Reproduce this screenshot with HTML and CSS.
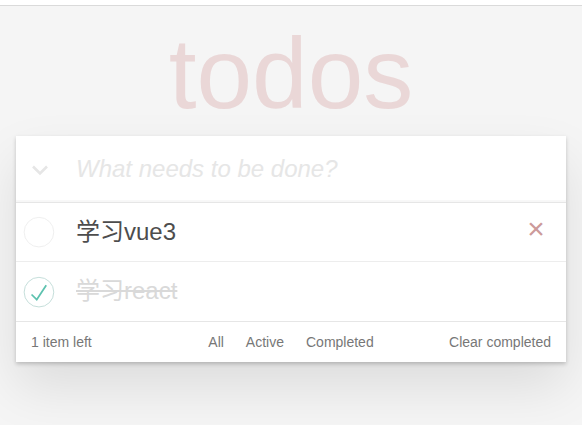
FILE: index.html
```html
<!DOCTYPE html>
<html lang="zh">
<head>
<meta charset="utf-8">
<title>todos</title>
<link rel="stylesheet" href="styles.css">
</head>
<body>
<div class="topbar"></div>
<section class="todoapp">
  <h1 class="title">todos</h1>
  <div class="card">
    <div class="new-row">
      <span class="toggle-all">
        <svg width="60" height="65" viewBox="0 0 60 65"><path d="M17 30.5 L24 37.5 L31 30.5" fill="none" stroke="#e6e6e6" stroke-width="2.6"/></svg>
      </span>
      <input class="new-todo" placeholder="What needs to be done?">
    </div>
    <ul class="todo-list">
      <li class="todo">
        <span class="toggle">
          <svg width="40" height="40" viewBox="-10 -18 100 135"><circle cx="50" cy="50" r="50" fill="none" stroke="#ededed" stroke-width="3"/></svg>
        </span>
        <label class="todo-label">学习vue3</label>
        <span class="destroy">×</span>
      </li>
      <li class="todo completed">
        <span class="toggle">
          <svg width="40" height="40" viewBox="-10 -18 100 135"><circle cx="50" cy="50" r="50" fill="none" stroke="#bddad5" stroke-width="3"/><path fill="#5dc2af" d="M72 25L42 71 27 56l-4 4 20 20 34-52z"/></svg>
        </span>
        <label class="todo-label">学习react</label>
      </li>
    </ul>
    <footer class="footer">
      <span class="todo-count"><strong>1</strong> item left</span>
      <ul class="filters"><li><a class="filter">All</a></li><li><a class="filter">Active</a></li><li><a class="filter">Completed</a></li></ul>
      <span class="clear">Clear completed</span>
    </footer>
  </div>
</section>
</body>
</html>
```

FILE: styles.css
```css
html, body { margin: 0; padding: 0; }
html { background: #f5f5f5; min-height: 100%; }
body {
  min-height: 425px;
  background: #f5f5f5;
  font-family: "Liberation Sans", Arial, "Noto Sans CJK SC", sans-serif;
  font-size: 14px;
  line-height: 1.4em;
  color: #4d4d4d;
}
.topbar {
  height: 5px;
  background: #fff;
  border-bottom: 1px solid #dadada;
}
.todoapp {
  width: 550px;
  margin: 0 auto 40px;
}
.title {
  margin: 0;
  padding-top: 5px;
  height: 125px;
  line-height: 125px;
  font-size: 100px;
  font-weight: 100;
  text-align: center;
  color: rgba(175, 47, 47, 0.15);
}
.card {
  background: #fff;
  box-shadow: 0 2px 4px 0 rgba(0,0,0,0.2), 0 25px 50px 0 rgba(0,0,0,0.1);
}
.new-row {
  display: flex;
  height: 65.6px;
  box-shadow: inset 0 -2px 1px rgba(0,0,0,0.03);
}
.toggle-all { flex: none; width: 60px; display: block; }
.toggle-all svg { display: block; }
.new-todo {
  flex: 1;
  min-width: 0;
  border: none;
  outline: none;
  background: transparent;
  padding: 16px 16px 16px 0;
  margin: 0;
  font-family: inherit;
  font-size: 24px;
  line-height: 1.4em;
  color: #4d4d4d;
}
.new-todo::placeholder {
  font-style: italic;
  font-weight: 300;
  color: #e6e6e6;
}
.todo-list {
  list-style: none;
  margin: 0;
  padding: 0;
  border-top: 1px solid #e6e6e6;
}
.todo {
  display: flex;
  align-items: center;
  border-bottom: 1px solid #ededed;
}
.todo:last-child { border-bottom: none; }
.toggle { flex: none; width: 40px; height: 40px; }
.toggle svg { display: block; }
.todo-label {
  flex: 1;
  padding: 15px 15px 15px 20px;
  font-size: 24px;
  line-height: 1.2;
  color: #4d4d4d;
}
.completed .todo-label {
  color: #d9d9d9;
  text-decoration: line-through;
}
.destroy {
  flex: none;
  width: 40px;
  height: 40px;
  margin: 0 10px 5px 0;
  font-size: 30px;
  line-height: 40px;
  text-align: center;
  color: #cc9a9a;
}
.footer {
  display: grid;
  grid-template-columns: 1fr auto 1fr;
  grid-template-rows: 20px;
  height: 20px;
  padding: 10px 15px;
  border-top: 1px solid #e6e6e6;
  color: #777;
  line-height: 20px;
}
.todo-count strong { font-weight: 300; }
.filters {
  list-style: none;
  margin: 0;
  padding: 0;
  line-height: 20px;
  white-space: nowrap;
}
.filters li { display: inline; }
.filter {
  margin: 3px;
  padding: 3px 7px;
  border: 1px solid transparent;
  border-radius: 3px;
  color: inherit;
}
.clear {
  justify-self: end;
  line-height: 20px;
}
```
